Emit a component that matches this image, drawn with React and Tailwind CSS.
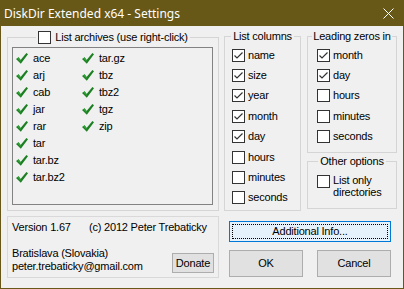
const archives = ['ace', 'arj', 'cab', 'jar', 'rar', 'tar', 'tar.bz', 'tar.bz2', 'tar.gz', 'tbz', 'tbz2', 'tgz', 'zip']

const listColumns = [
  ['name', true],
  ['size', true],
  ['year', true],
  ['month', true],
  ['day', true],
  ['hours', false],
  ['minutes', false],
  ['seconds', false],
]

const leadingZeros = [
  ['month', true],
  ['day', true],
  ['hours', false],
  ['minutes', false],
  ['seconds', false],
]

function Box({ checked }) {
  return (
    <span className="flex h-[13px] w-[13px] shrink-0 items-center justify-center border border-[#333333] bg-white">
      {checked ? (
        <svg width="11" height="11" viewBox="0 0 11 11">
          <path d="M1.5 5.5 L4 8 L9.5 2.5" fill="none" stroke="#333333" strokeWidth="1.2" />
        </svg>
      ) : null}
    </span>
  )
}

function GreenCheck() {
  return (
    <svg width="12" height="11" viewBox="0 0 12 11" className="shrink-0">
      <path d="M0 6 L2.6 4.2 L4.6 7 L10.4 0 L12 1.2 L4.8 10.8 Z" fill="#1d7f23" />
      <path d="M2.6 4.2 L4.6 7 L4.8 9 L1.2 5.6 Z" fill="#2fa236" />
    </svg>
  )
}

function Option({ label, checked }) {
  return (
    <div className="flex h-[20.4px] items-center gap-[3px]">
      <Box checked={checked} />
      <span>{label}</span>
    </div>
  )
}

function Button({ children, className = '' }) {
  return (
    <button className={`flex items-center justify-center border border-[#adadad] bg-[#e1e1e1] text-black ${className}`}>
      {children}
    </button>
  )
}

export default function App() {
  return (
    <div
      className="flex h-[289px] w-[404px] flex-col bg-[#675818] text-[11px] leading-[13px] tracking-[-0.2px] text-black"
      style={{ fontFamily: '"Liberation Sans", Arial, sans-serif' }}
    >
      <div className="flex h-[26px] shrink-0 items-center justify-between pl-[4px] pr-[10px] text-white">
        <span className="text-[12px] tracking-normal" style={{ fontFamily: '"Noto Sans", sans-serif' }}>
          DiskDir Extended x64 - Settings
        </span>
        <svg width="11" height="11" viewBox="0 0 11 11">
          <path d="M0.5 0.5 L10.5 10.5 M10.5 0.5 L0.5 10.5" stroke="white" strokeWidth="1" />
        </svg>
      </div>

      <div className="mx-[1px] mb-[1px] flex flex-1 gap-[5px] bg-[#f0f0f0] pl-[6px] pr-[6px] pt-[4px]">
        <div className="flex w-[212px] flex-col">
          <fieldset className="h-[181px] border border-[#d5d5d5]">
            <legend className="mx-auto flex h-[14px] items-center gap-[4px] whitespace-nowrap px-[2px]">
              <Box checked={false} />
              <span>List archives (use right-click)</span>
            </legend>
            <div className="ml-[4px] mr-[5px] mt-[3px] h-[158px] border border-[#828282] bg-[#f0f0f0] pl-[3px] pt-[2px]">
              <div className="grid grid-flow-col grid-cols-[66px_1fr] grid-rows-[repeat(8,17px)]">
                {archives.map((a) => (
                  <div key={a} className="flex items-center gap-[5px]">
                    <GreenCheck />
                    <span>{a}</span>
                  </div>
                ))}
              </div>
            </div>
          </fieldset>

          <div className="mt-[5px] h-[62px] border border-[#d9d9d9] pl-[4px] pr-[4px] pt-[4px]">
            <div className="flex">
              <span className="w-[77px]">Version 1.67</span>
              <span>(c) 2012 Peter Trebaticky</span>
            </div>
            <div className="mt-[13px] flex items-end justify-between">
              <div className="flex flex-col">
                <span>Bratislava (Slovakia)</span>
                <span>peter.trebaticky@gmail.com</span>
              </div>
              <Button className="h-[20px] w-[42px]">Donate</Button>
            </div>
          </div>
        </div>

        <div className="flex w-[173px] flex-col">
          <div className="flex gap-[6px]">
            <fieldset className="h-[181px] w-[77px] border border-[#d5d5d5]">
              <legend className="mx-auto h-[13px] whitespace-nowrap px-[2px]">List columns</legend>
              <div className="mt-[2px] flex flex-col pl-[7px]">
                {listColumns.map(([label, checked]) => (
                  <Option key={label} label={label} checked={checked} />
                ))}
              </div>
            </fieldset>

            <div className="flex w-[90px] flex-col">
              <fieldset className="h-[123px] border border-[#d5d5d5]">
                <legend className="mx-auto h-[13px] whitespace-nowrap px-[1px]">Leading zeros in</legend>
                <div className="mt-[2px] flex flex-col pl-[9px]">
                  {leadingZeros.map(([label, checked]) => (
                    <Option key={label} label={label} checked={checked} />
                  ))}
                </div>
              </fieldset>

              <fieldset className="mt-[2px] h-[54px] border border-[#d5d5d5]">
                <legend className="mx-auto h-[13px] whitespace-nowrap px-[2px]">Other options</legend>
                <div className="mt-[7px] flex items-start gap-[3px] pl-[9px]">
                  <Box checked={false} />
                  <span className="-mt-[1px] leading-[12px]">
                    List only
                    <br />
                    directories
                  </span>
                </div>
              </fieldset>
            </div>
          </div>

          <div className="ml-[5px] mr-[6px] mt-[10px] flex flex-col gap-[8px]">
            <button className="h-[21px] w-full border border-[#0078d7] bg-[#e5f1fb] p-[2px]">
              <span className="flex h-full w-full items-center justify-center border border-dotted border-black">
                Additional Info...
              </span>
            </button>
            <div className="flex justify-between">
              <Button className="h-[27px] w-[74px]">OK</Button>
              <Button className="h-[27px] w-[74px]">Cancel</Button>
            </div>
          </div>
        </div>
      </div>
    </div>
  )
}
